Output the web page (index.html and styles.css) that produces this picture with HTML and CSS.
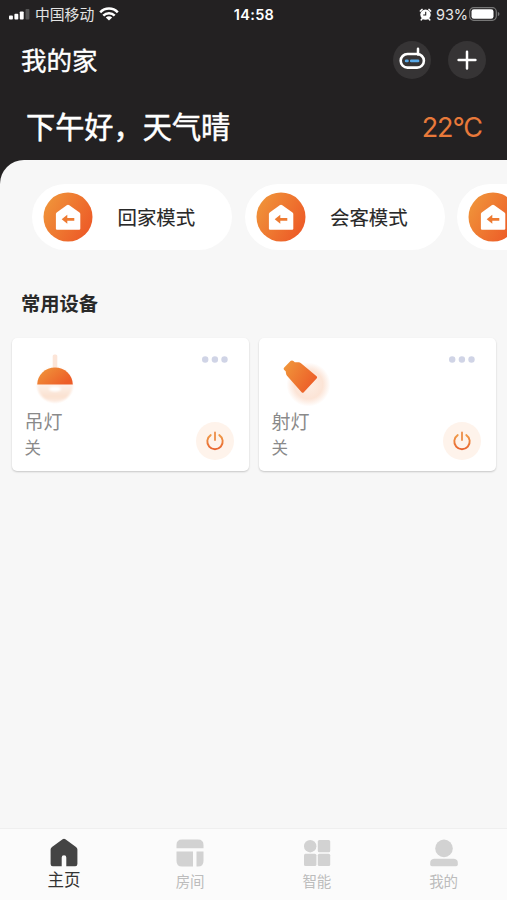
FILE: index.html
```html
<!DOCTYPE html>
<html lang="zh-CN">
<head>
<meta charset="utf-8">
<title>我的家</title>
<link rel="stylesheet" href="styles.css">
</head>
<body>
<svg width="0" height="0" class="defs">
  <defs>
    <linearGradient id="orange" x1="0" y1="0" x2="1" y2="0.6"><stop offset="0" stop-color="#f09a3c"/><stop offset="1" stop-color="#ed5d28"/></linearGradient>
    <linearGradient id="power" x1="0" y1="0" x2="0" y2="1"><stop offset="0" stop-color="#f09a48"/><stop offset="1" stop-color="#e8642f"/></linearGradient>
    <radialGradient id="glow"><stop offset="0" stop-color="#fdeee4"/><stop offset=".65" stop-color="#fce4d6"/><stop offset="1" stop-color="#fce4d6" stop-opacity="0"/></radialGradient>
    <linearGradient id="bowl" x1="0" y1="0" x2="0" y2="1"><stop offset="0" stop-color="#fdf1e9"/><stop offset=".7" stop-color="#fbe1d0"/><stop offset="1" stop-color="#fdeee5"/></linearGradient>
    <filter id="soft" x="-20%" y="-20%" width="140%" height="140%"><feGaussianBlur stdDeviation=".8"/></filter>
    <symbol id="scene" viewBox="0 0 50 50">
      <circle cx="25" cy="25" r="24.5" fill="url(#orange)"/>
      <path d="M36.500 20.600Q37.300 21.200 37.300 22.100V36.700Q37.300 37.800 36.200 37.800H14Q12.900 37.800 12.900 36.700V22.100Q12.900 21.200 13.700 20.600L23.700 13.200Q25 12.300 26.300 13.200Z" fill="#fff"/>
      <path d="M18.700 27.300 24.300 22.800v3.100h7v2.800h-7v3.100Z" fill="#ee7a31"/>
    </symbol>
    <symbol id="dots" viewBox="0 0 28 8"><g fill="#d0d4e6"><circle cx="4.200" cy="4.500" r="3.200"/><circle cx="13.900" cy="4.500" r="3.200"/><circle cx="23.500" cy="4.500" r="3.200"/></g></symbol>
    <symbol id="switch" viewBox="0 0 38 38"><circle cx="19" cy="19" r="19" fill="#fef3eb"/><path d="M14.700 13.100A7.700 7.700 0 1 0 23.300 13.100" fill="none" stroke="url(#power)" stroke-width="1.9" stroke-linecap="round"/><path d="M19 10.400V18" stroke="#ee9250" stroke-width="1.9" stroke-linecap="round"/></symbol>
  </defs>
</svg>
<div class="app">
  <header class="top">
    <div class="status">
      <div class="carrier">
        <svg width="22" height="11" viewBox="0 0 22 11"><g fill="#fff"><rect x="0" y="6.5" width="3.9" height="4" rx=".9"/><rect x="5.4" y="4.8" width="3.9" height="5.7" rx=".9"/><rect x="10.8" y="2.4" width="3.9" height="8.1" rx=".9"/><rect x="16.5" y="0" width="3.9" height="10.5" rx=".9" fill="#555"/></g></svg>
        <span class="carrier-name">中国移动</span>
        <svg class="wifi" width="20" height="14" viewBox="0 0 20 14" fill="none" stroke="#fff" stroke-width="2.5"><path d="M1.2 5.300a12.200 12.200 0 0 1 17.600 0M4.300 8.600a7.900 7.900 0 0 1 11.400 0"/><path d="M10 13.600 6.800 10.500a4.500 4.500 0 0 1 6.400 0Z" fill="#fff" stroke="none"/></svg>
      </div>
      <div class="clock">14:58</div>
      <div class="power-state">
        <svg width="13" height="13" viewBox="0 0 13 13"><circle cx="6.500" cy="6.600" r="5.200" fill="#fff"/><path d="M1.400 3 3 1.500M10 1.500 11.600 3M3 11l-.7.800M10 11l.7.800" stroke="#fff" stroke-width="1.700" stroke-linecap="round"/><path d="M6.700 3.800V7H4.200" fill="none" stroke="#232122" stroke-width="1.100"/></svg>
        <span class="percent">93%</span>
        <svg width="31" height="14" viewBox="0 0 31 14"><rect x=".7" y=".7" width="26.600" height="12.600" rx="4" fill="none" stroke="#777" stroke-width="1.200"/><rect x="2.500" y="2.200" width="22" height="9.600" rx="2.300" fill="#fff"/><path d="M28.800 4.700q1.700.7 1.700 2.300t-1.700 2.300Z" fill="#777"/></svg>
      </div>
    </div>
    <div class="title-row">
      <h1 class="title">我的家</h1>
      <div class="actions">
        <svg class="round" viewBox="0 0 38 38"><path d="M25 13.400V7.800" stroke="#fff" stroke-width="2.500" stroke-linecap="round"/><rect x="7.700" y="13" width="23.200" height="13.600" rx="6.800" fill="none" stroke="#fff" stroke-width="2.600"/><path d="M13.200 19.900h1.200M18.300 19.900H25" stroke="#58a9e8" stroke-width="2.800" stroke-linecap="round"/></svg>
        <svg class="round" viewBox="0 0 38 38"><path d="M19 10.700v16.800M10.600 19.100h16.800" stroke="#fff" stroke-width="2.500" stroke-linecap="round"/></svg>
      </div>
    </div>
    <div class="weather"><span class="greeting">下午好，天气晴</span><span class="temp">22°C</span></div>
  </header>
  <main class="sheet">
    <div class="scenes">
      <div class="scene"><svg class="scene-icon"><use href="#scene"/></svg><span>回家模式</span></div>
      <div class="scene"><svg class="scene-icon"><use href="#scene"/></svg><span>会客模式</span></div>
      <div class="scene"><svg class="scene-icon"><use href="#scene"/></svg></div>
    </div>
    <h2 class="section">常用设备</h2>
    <div class="devices">
      <article class="card">
        <div class="card-head">
          <svg class="lamp" viewBox="0 0 64 64"><rect x="29.700" y="9.500" width="4.600" height="14" rx="1.600" fill="#fce5d8"/><circle cx="32" cy="39.500" r="19.500" fill="url(#glow)" opacity=".5"/><path d="M14.300 39.500a17.700 17.700 0 0 0 35.400 0Z" fill="url(#bowl)" filter="url(#soft)"/><ellipse cx="32" cy="44" rx="6" ry="2.600" fill="#fff" filter="url(#soft)"/><path d="M14.200 39.500a17.800 17 0 0 1 35.600 0Z" fill="url(#orange)"/></svg>
          <svg class="dots"><use href="#dots"/></svg>
        </div>
        <div class="card-foot"><div class="info"><div class="name">吊灯</div><div class="state">关</div></div><svg class="switch"><use href="#switch"/></svg></div>
      </article>
      <article class="card">
        <div class="card-head">
          <svg class="lamp" viewBox="0 0 64 64"><circle cx="38.500" cy="39.500" r="22" fill="url(#glow)"/><path d="M14 22.700 20.500 16Q22 14.800 23.400 16L24.800 17.200 28.500 17.200Q30 17.300 31 18.200L46.600 31.300Q47.600 32.200 46.800 33.200L33.800 47.200Q32.700 48.200 31.600 47.200L17 30.800Q16 29.600 16 28.200L15.700 26.300 14 24.700Q13.200 23.700 14 22.700Z" fill="url(#orange)"/></svg>
          <svg class="dots"><use href="#dots"/></svg>
        </div>
        <div class="card-foot"><div class="info"><div class="name">射灯</div><div class="state">关</div></div><svg class="switch"><use href="#switch"/></svg></div>
      </article>
    </div>
  </main>
  <nav class="tabs">
    <div class="tab active"><svg class="tab-icon" viewBox="0 0 30 30"><path d="M13.600 1.300q1.400-1 2.800 0L27 8.900q1.400 1 1.400 2.600v14.500q0 2.200-2.200 2.200H17.300V19.500a2.300 2.300 0 0 0-4.600 0v8.700H3.800q-2.200 0-2.200-2.200V11.500Q1.600 9.900 3 8.900Z"/></svg><span>主页</span></div>
    <div class="tab"><svg class="tab-icon" viewBox="0 0 30 30"><path d="M7 1.500H23Q28.500 1.500 28.500 7V10.200H1.500V7Q1.500 1.500 7 1.500ZM1.500 13.500H18V28.500H7Q1.500 28.500 1.500 23ZM21.500 13.500H28.500V23Q28.500 28.500 23 28.500H21.500Z"/></svg><span>房间</span></div>
    <div class="tab"><svg class="tab-icon" viewBox="0 0 30 30"><circle cx="8.200" cy="8.200" r="6.200"/><rect x="15.800" y="2" width="12.400" height="12.200" rx="1.500"/><rect x="2" y="15.700" width="12.400" height="12.200" rx="1.500"/><rect x="15.800" y="15.700" width="12.400" height="12.200" rx="1.500"/></svg><span>智能</span></div>
    <div class="tab"><svg class="tab-icon" viewBox="0 0 30 30"><circle cx="15" cy="10.400" r="8.800"/><path d="M5 20.800H25Q28.800 21.200 28.800 25V26.500Q28.800 28.200 27 28.200H3Q1.200 28.200 1.200 26.500V25Q1.200 21.200 5 20.800Z"/></svg><span>我的</span></div>
  </nav>
</div>
</body>
</html>
```
FILE: styles.css
```css
* { box-sizing: border-box; }
body { margin: 0; background: #232122; font-family: Inter, "Noto Sans CJK SC", sans-serif; }
svg { display: block; flex: none; }
.defs { position: absolute; }
.app { width: 507px; height: 900px; display: flex; flex-direction: column; overflow: hidden; }
.top { height: 160px; flex: none; color: #fff; background: #232122; }
.status { height: 28px; padding: 0 7px 0 9px; display: grid; grid-template-columns: 1fr auto 1fr; align-items: center; }
.carrier { display: flex; align-items: center; }
.carrier-name { margin: 1px 0 0 4px; font-size: 14.800px; line-height: 20px; color: #e4e4e4; }
.wifi { margin-left: 5px; }
.clock { margin-right: 1px; font-size: 14.500px; font-weight: 600; letter-spacing: .3px; }
.power-state { display: flex; align-items: center; justify-content: flex-end; }
.percent { margin: 0 1px 0 4px; font-size: 14.500px; letter-spacing: -.1px; color: #e8e8e8; }
.title-row { height: 64px; padding: 0 21px; display: flex; align-items: center; justify-content: space-between; }
.title { margin: 1px 0 0; font-size: 25.500px; line-height: 36px; font-weight: 400; -webkit-text-stroke: .4px #fff; }
.actions { display: flex; gap: 17px; }
.round { width: 38px; height: 38px; border-radius: 50%; background: #363435; }
.weather { height: 68px; padding: 3px 25px 0 26px; display: flex; align-items: center; justify-content: space-between; }
.greeting { font-size: 29.200px; line-height: 42px; -webkit-text-stroke: .5px #fff; }
.temp { font-size: 27px; letter-spacing: -1.100px; color: #e8793a; }
.sheet { flex: 1; min-height: 0; background: #f7f7f7; border-top-left-radius: 24px; padding-top: 24px; }
.scenes { display: flex; gap: 12.500px; padding-left: 32px; overflow: hidden; }
.scene { flex: none; width: 200px; height: 66px; border-radius: 33px; background: #fff; padding-left: 11px; display: flex; align-items: center; gap: 24.500px; color: #292929; font-size: 19.400px; line-height: 28px; -webkit-text-stroke: .15px #292929; }
.scene span { margin-top: 1px; }
.scene-icon { width: 50px; height: 50px; }
.section { margin: 39px 0 19px 21px; font-size: 19.300px; line-height: 30px; font-weight: 700; color: #292929; }
.devices { display: grid; grid-template-columns: 1fr 1fr; gap: 10px; padding: 0 11px 0 12px; }
.card { height: 133px; background: #fff; border-radius: 5px; box-shadow: 0 1px 2px rgba(0,0,0,.2); padding: 7px 15px 11px 12.500px; display: flex; flex-direction: column; justify-content: space-between; }
.card-head { display: flex; justify-content: space-between; }
.lamp { width: 64px; height: 64px; margin: 0 0 0 -2px; }
.dots { width: 28px; height: 8px; margin: 10px 5px 0 0; }
.card-foot { display: flex; justify-content: space-between; align-items: flex-end; height: 51px; }
.info { margin-bottom: -1px; color: #8a8a8a; }
.name { font-size: 19px; line-height: 26px; }
.state { font-size: 16.500px; line-height: 25px; }
.switch { width: 38px; height: 38px; }
.tabs { height: 72px; flex: none; padding: 9px 0 0; background: #fbfbfb; border-top: 1px solid #efefef; display: grid; grid-template-columns: repeat(4, 1fr); }
.tab { display: flex; flex-direction: column; align-items: center; color: #bcbcbc; fill: #d2d2d2; font-size: 14.500px; line-height: 27px; }
.tab-icon { width: 30px; height: 30px; }
.active { padding-left: 1px; color: #333; fill: #444; font-size: 16.500px; line-height: 25px; }
```
